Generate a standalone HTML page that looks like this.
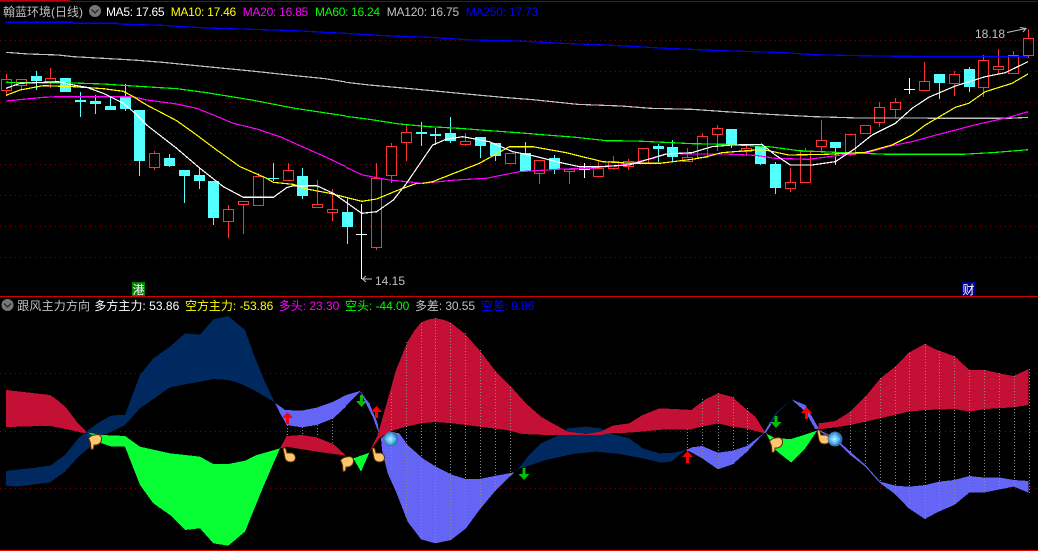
<!DOCTYPE html>
<html><head><meta charset="utf-8"><title>K线</title>
<style>
html,body{margin:0;padding:0;background:#000;width:1038px;height:551px;overflow:hidden}
svg{display:block}
text{font-family:"Liberation Sans","Noto Sans CJK SC",sans-serif;font-size:12px}
</style></head><body>
<svg width="1038" height="551" viewBox="0 0 1038 551" xmlns="http://www.w3.org/2000/svg">
<defs>
<radialGradient id="g" cx="45%" cy="50%" r="55%"><stop offset="0" stop-color="#b8ecff"/><stop offset=".55" stop-color="#58b4ec"/><stop offset="1" stop-color="#1458a8"/></radialGradient>
</defs>
<rect width="1038" height="551" fill="#000"/>
<g shape-rendering="crispEdges">
<path d="M0 1.5H1038" stroke="#8c0000"/>
<path d="M0 .5H70" stroke="#c00000"/>
<path d="M0 296.5H1038" stroke="#d00000"/>
<path d="M0 550.5H1038" stroke="#e00000"/>
<path d="M0 40.5H1038M0 71.5H1038M0 102.5H1038M0 133.5H1038M0 164.5H1038M0 195.5H1038M0 226.5H1038M0 257.5H1038M0 373.5H1038M0 431.5H1038M0 488.5H1038" stroke="#900000" stroke-dasharray="1 4" fill="none"/>

<!-- cyan candles -->
<path fill="none" stroke="#54ffff" stroke-width="1.2" d="M36.5 71V90M65.5 78V92M80.5 92V117M95.5 95V114M110.5 97V110M125.5 84V111M139.5 110V176M169.5 154V167M184.5 170V203M199.5 167V189M213.5 181V225M273.5 163V181M302.5 168V199M347.5 198V244M421.5 122V146M435.5 128V145M450.5 117V143M480.5 137V158M495.5 143V161M525.5 142V172M554.5 155V174M658.5 144V162M672.5 140V162M731.5 129V148M760.5 146V165M775.5 162V194M835.5 142V165M939.5 74V99M969.5 67V92"/>
<path fill="#54ffff" d="M31 76h11V81h-11zM60 78h11V92h-11zM75 100h11V102h-11zM90 101h11V104h-11zM105 106h11V110h-11zM120 97h11V109h-11zM134 110h11V161h-11zM164 158h11V166h-11zM179 170h11V176h-11zM194 175h11V181h-11zM208 181h11V218h-11zM268 178h11V179h-11zM297 176h11V196h-11zM342 212h11V227h-11zM416 132h11V134h-11zM430 134h11V136h-11zM445 133h11V141h-11zM475 137h11V146h-11zM490 143h11V156h-11zM520 153h11V171h-11zM549 158h11V169h-11zM653 146h11V149h-11zM667 147h11V157h-11zM726 129h11V145h-11zM755 146h11V164h-11zM770 164h11V188h-11zM830 142h11V148h-11zM934 74h11V83h-11zM964 69h11V87h-11z"/>

<!-- red candles -->
<path fill="none" stroke="#ff3232" stroke-width="1.2" d="M6.5 74V79M6.5 90V96M1.5 79.5H11.5V90.5H1.5ZM21.5 85V89M16.5 79.5H26.5V85.5H16.5ZM50.5 68V78M50.5 81V88M45.5 78.5H55.5V81.5H45.5ZM154.5 151V153M154.5 167V170M149.5 153.5H159.5V167.5H149.5ZM228.5 205V209M228.5 221V238M223.5 209.5H233.5V221.5H223.5ZM243.5 204V234M238.5 201.5H248.5V204.5H238.5ZM258.5 173V176M253.5 176.5H263.5V205.5H253.5ZM288.5 163V170M283.5 170.5H293.5V180.5H283.5ZM317.5 180V204M312.5 204.5H322.5V207.5H312.5ZM332.5 189V209M332.5 212V221M327.5 209.5H337.5V212.5H327.5ZM376.5 163V178M376.5 247V250M371.5 178.5H381.5V247.5H371.5ZM391.5 143V146M391.5 175V183M386.5 146.5H396.5V175.5H386.5ZM406.5 125V132M406.5 142V161M401.5 132.5H411.5V142.5H401.5ZM465.5 133V141M465.5 144V146M460.5 141.5H470.5V144.5H460.5ZM505.5 153.5H515.5V163.5H505.5ZM539.5 173V184M534.5 160.5H544.5V173.5H534.5ZM569.5 171V184M564.5 169.5H574.5V171.5H564.5ZM598.5 160V168M593.5 168.5H603.5V176.5H593.5ZM613.5 156V161M613.5 168V170M608.5 161.5H618.5V168.5H608.5ZM628.5 159V161M628.5 166V170M623.5 161.5H633.5V166.5H623.5ZM638.5 148.5H648.5V163.5H638.5ZM687.5 148V157M682.5 157.5H692.5V161.5H682.5ZM702.5 133V136M697.5 136.5H707.5V157.5H697.5ZM717.5 125V128M717.5 134V151M712.5 128.5H722.5V134.5H712.5ZM746.5 146V148M746.5 151V156M741.5 148.5H751.5V151.5H741.5ZM790.5 168V182M790.5 188V192M785.5 182.5H795.5V188.5H785.5ZM805.5 148V151M805.5 182V183M800.5 151.5H810.5V182.5H800.5ZM821.5 120V140M821.5 146V153M816.5 140.5H826.5V146.5H816.5ZM850.5 154V156M845.5 134.5H855.5V154.5H845.5ZM860.5 125.5H870.5V133.5H860.5ZM879.5 102V107M879.5 122V127M874.5 107.5H884.5V122.5H874.5ZM895.5 98V102M895.5 109V118M890.5 102.5H900.5V109.5H890.5ZM924.5 62V81M919.5 81.5H929.5V90.5H919.5ZM954.5 71V74M954.5 83V96M949.5 74.5H959.5V83.5H949.5ZM983.5 55V60M983.5 87V97M978.5 60.5H988.5V87.5H978.5ZM998.5 49V66M998.5 69V74M993.5 66.5H1003.5V69.5H993.5ZM1013.5 51V55M1008.5 55.5H1018.5V73.5H1008.5ZM1028.5 29V38M1028.5 55V58M1023.5 38.5H1033.5V55.5H1023.5Z"/>
<path fill="none" stroke="#ffffff" stroke-width="1.2" d="M361.5 204V279M356 234.5H367M584.5 163V178M579 169.5H590M909.5 78V94M904 89.5H915"/>

<!-- MA lines -->
<g transform="scale(.33333)" fill="none" stroke-width="3.6">
<polyline stroke="#0000ff" points="18,67 218,67 220,70 354,70 354,72 487,76 620,84 755,88 885,92 975,97 1038,100"/>
<polyline stroke="#c0c0c0" points="18,157 85,162 175,165 220,170 310,175 400,180 488,187 620,200 755,213 885,227 975,236 1038,246"/>
<polyline stroke="#00ff00" points="18,247 220,249 310,252 400,258 530,266 620,278 755,300 885,325 1038,348"/>
<polyline stroke="#ff00ff" points="18,303 130,292 175,290 400,290 440,300 530,312 590,325 640,345 700,370 770,387 845,412 900,437 975,470 1038,500"/>
<polyline stroke="#ffff00" points="18,286 60,270 130,257 220,260 310,266 370,274 400,290 440,315 530,362 590,405 650,450 720,500 800,535 820,547 880,553 920,567 990,580 1050,595 1085,604 1130,597 1190,572 1250,550 1269,550"/>
<polyline stroke="#ffffff" points="18,265 60,250 110,248 175,245 220,255 260,262 310,280 370,310 400,335 440,375 530,445 600,505 670,560 730,592 820,592 860,563 880,557 950,557 1000,580 1050,615 1085,640 1130,635 1180,600 1218,552"/>
</g>
<g transform="translate(346,0) scale(.33333)" fill="none" stroke-width="3.6">
<polyline stroke="#0000ff" points="0,100 25,102 160,109 250,112 380,120 515,123 650,130 780,135 870,140 960,145 1038,148"/>
<polyline stroke="#c0c0c0" points="0,247 70,255 205,267 340,280 470,292 560,299 695,313 825,318 915,325 1038,328"/>
<polyline stroke="#00ff00" points="0,349 70,358 160,372 250,380 340,385 430,392 515,398 600,405 690,412 780,422 870,423 1038,431"/>
<polyline stroke="#ff00ff" points="0,502 50,525 130,540 230,550 330,540 420,535 520,515 650,507 740,505 840,493 920,475 970,460 1038,462"/>
<polyline stroke="#ffff00" points="230,550 260,545 400,490 490,440 560,440 660,458 770,485 860,490 940,490 1038,478"/>
<polyline stroke="#ffffff" points="180,552 260,435 300,418 350,410 430,425 500,455 560,467 640,487 700,500 760,500 850,495 900,480 960,462 1038,458"/>
</g>
<g transform="translate(692,0) scale(.33333)" fill="none" stroke-width="3.6">
<polyline stroke="#0000ff" points="0,148 55,151 185,155 275,158 365,164 500,167 635,169 1008,170"/>
<polyline stroke="#c0c0c0" points="0,328 100,335 230,343 365,350 500,354 950,355 1008,352"/>
<polyline stroke="#00ff00" points="0,431 100,433 230,440 320,452 455,458 590,463 810,463 900,458 975,452 1008,449"/>
<polyline stroke="#ff00ff" points="0,462 100,462 190,466 250,475 350,478 455,464 530,457 600,437 660,425 740,403 860,372 950,352 1008,335"/>
<polyline stroke="#ffff00" points="0,478 35,472 90,458 190,450 220,450 290,465 400,463 520,457 600,435 660,405 700,375 790,322 830,310 880,275 960,250 1008,222"/>
<polyline stroke="#ffffff" points="0,458 60,440 120,435 210,433 250,465 295,495 360,495 430,485 490,445 540,405 610,370 660,325 710,292 790,258 880,230 940,218 1008,185"/>
</g>

<!-- lower fills -->
<g transform="translate(0,310) scale(.33333)">
<polygon fill="#c41034" points="18,240 150,255 175,272 200,295 230,335 265,372 200,358 150,348 120,348 60,350 18,351"/>
<polygon fill="#00295f" points="18,483 90,475 150,467 195,435 235,385 265,360 300,335 335,316 375,315 420,195 460,145 510,110 555,70 600,74 640,28 685,18 735,60 760,130 790,205 825,278 770,245 720,220 685,210 640,207 600,215 560,222 510,232 470,260 420,295 375,345 335,365 305,375 265,415 235,440 195,485 150,517 90,525 50,530 18,527"/>
<polygon fill="#08ff34" points="265,368 305,375 375,378 420,410 510,430 600,440 640,462 685,462 735,452 770,435 840,415 790,530 735,665 685,707 640,700 600,655 555,660 510,615 460,580 420,525 375,410 335,410 305,400 275,375"/>
<polygon fill="#6464f5" points="825,278 855,300 905,302 950,293 1000,275 1038,255 1038,290 1000,325 950,345 905,352 860,345 840,310"/>
<polygon fill="#c41034" points="840,415 860,378 905,375 950,382 1000,402 1038,437 950,425 860,410"/>
</g>
<g transform="translate(346,310) scale(.33333)">
<polygon fill="#6464f5" points="0,255 42,243 70,280 95,340 100,375 80,320 42,245 0,288"/>
<polygon fill="#08ff34" points="22,445 70,428 45,485"/>
<polygon fill="#00295f" points="510,485 545,440 585,400 640,375 665,355 720,350 765,355 790,370 850,385 890,415 940,430 985,428 1020,420 975,455 945,458 890,445 820,432 750,425 680,432 600,450 510,480"/>
<polygon fill="#6464f5" points="105,385 130,365 160,370 185,405 230,445 270,470 320,495 360,507 400,507 450,497 505,487 450,540 400,600 360,655 315,690 268,700 225,688 185,635 150,545 125,490 108,420"/>
<polygon fill="#c41034" points="70,425 95,375 125,270 150,180 185,95 205,62 225,38 245,29 268,25 292,29 315,38 355,70 400,120 450,185 495,230 540,280 585,320 620,340 665,365 720,372 765,365 800,347 850,340 890,315 940,295 985,297 1038,300 1038,358 960,358 850,368 790,370 765,375 720,375 665,375 600,375 530,372 480,360 400,350 320,340 268,336 225,340 180,350 130,365 100,385"/>
<polygon fill="#6464f5" points="1020,420 1038,412 1038,428"/>
</g>
<g transform="translate(692,310) scale(.33333)">
<polygon fill="#c41034" points="0,298 40,268 78,250 120,260 160,295 190,320 218,365 218,370 160,355 120,350 78,340 40,348 0,357"/>
<polygon fill="#6464f5" points="0,412 30,408 78,428 122,422 165,408 215,370 165,425 122,463 78,478 30,445 0,428"/>
<polygon fill="#6464f5" points="215,370 235,335 237,345 222,368"/>
<polygon fill="#00295f" points="235,335 250,310 298,268 255,312 237,345"/>
<polygon fill="#6464f5" points="298,268 340,285 380,355 370,358 340,305"/>
<polygon fill="#08ff34" points="222,370 250,385 298,387 375,362 340,415 298,458 250,420"/>
<polygon fill="#c41034" points="380,340 430,333 475,305 520,260 565,205 610,170 650,128 698,102 740,122 787,138 832,180 880,180 920,190 965,198 1010,177 1010,285 965,292 880,297 832,305 787,297 700,300 650,305 565,325 475,345 430,352 380,358"/>
<polygon fill="#6464f5" points="380,358 430,385 475,425 520,465 565,515 610,527 650,530 700,525 740,515 787,510 832,498 880,503 920,502 965,510 1010,513 1010,548 965,530 880,547 832,548 787,585 740,605 698,627 650,595 610,553 565,520 520,470 475,435 440,400 385,365"/>
</g>

<!-- dotted verticals -->
<path fill="none" stroke="#8c8c8c" stroke-width="1.2" stroke-dasharray="1 2" d="M287.5 425V436M302.5 427V435M317.5 425V437M332.5 418V444M391.5 393V470M406.5 342V518M421.5 323V539M435.5 318V543M450.5 323V540M465.5 333V528M480.5 350V508M495.5 372V490M510.5 387V475M687.5 429V453M702.5 399V458M718.5 393V469M733.5 397V464M747.5 408V452M850.5 412V455M865.5 397V467M880.5 378V483M895.5 367V494M909.5 353V509M925.5 344V519M939.5 351V512M954.5 356V505M969.5 370V493M984.5 370V492M999.5 373V488M1014.5 376V487M1029.5 369V493"/>
</g>

<!-- arrows -->
<g fill="#ff0000">
<path d="M287.5 412l5.5 6h-4v6h-3v-6h-4z"/>
<path d="M376.5 406l5.5 6h-4v6h-3v-6h-4z"/>
<path d="M687.5 451l5.5 6h-4v6h-3v-6h-4z"/>
<path d="M806.5 407l5.5 6h-4v6h-3v-6h-4z"/>
</g>
<g fill="#00c000">
<path d="M361.5 407l5.5-6h-4v-6h-3v6h-4z"/>
<path d="M524 480l5.5-6h-4v-6h-3v6h-4z"/>
<path d="M776 428l5.5-6h-4v-6h-3v6h-4z"/>
</g>

<!-- hands -->
<g fill="#ffc46e" stroke="#5a3000" stroke-width="1" stroke-linejoin="round">
<path transform="translate(88,434)" d="M.5 4L4 1.5L9 .5Q13.5 .5 13.5 5Q13.5 10 8 11L6 11L5.5 15L3 15.5L2.5 9Z"/>
<path transform="translate(340,456)" d="M.5 4L4 1.5L9 .5Q13.5 .5 13.5 5Q13.5 10 8 11L6 11L5.5 15L3 15.5L2.5 9Z"/>
<path transform="translate(769,437)" d="M.5 4L4 1.5L9 .5Q13.5 .5 13.5 5Q13.5 10 8 11L6 11L5.5 15L3 15.5L2.5 9Z"/>
<path transform="translate(282,448)" d="M1 0L3.5 0L5 5L10 5Q13.5 6.5 13.5 10Q13 14 8.5 14Q4 14 3 10Z"/>
<path transform="translate(371,448)" d="M1 0L3.5 0L5 5L10 5Q13.5 6.5 13.5 10Q13 14 8.5 14Q4 14 3 10Z"/>
<path transform="translate(816,430)" d="M1 0L3.5 0L5 5L10 5Q13.5 6.5 13.5 10Q13 14 8.5 14Q4 14 3 10Z"/>
</g>

<!-- globes -->
<circle cx="391" cy="439" r="7" fill="url(#g)" stroke="#4a7fa8" stroke-width=".7"/>
<circle cx="835" cy="439" r="7" fill="url(#g)" stroke="#4a7fa8" stroke-width=".7"/>
<path d="M391 433V445M385 439H397M835 433V445M829 439H841" stroke="#d8f2ff" stroke-width=".6" stroke-dasharray="1 1"/>

<!-- price markers -->
<path d="M372 279H363M366 276L362.5 279L366 282" fill="none" stroke="#c0c0c0"/>
<text x="375" y="285" fill="#c0c0c0" textLength="30">14.15</text>
<text x="975" y="38" fill="#c0c0c0" textLength="30">18.18</text>
<path d="M1007 32.5L1026 28.5M1020 27.5L1026 28.5L1023 32" fill="none" stroke="#c0c0c0"/>

<!-- badges -->
<rect x="132" y="282" width="13" height="14" fill="#008000"/>
<text x="132.5" y="294" fill="#ffffff">港</text>
<rect x="962" y="282" width="13" height="14" fill="#000090"/>
<text x="962.5" y="294" fill="#ffffff">财</text>

<!-- header 1 -->
<text x="3" y="16" fill="#c0c0c0" textLength="80">翰蓝环境(日线)</text>
<circle cx="95" cy="11" r="6" fill="#777"/>
<path d="M91.5 9.5L95 13L98.5 9.5" fill="none" stroke="#2a2a2a" stroke-width="1.3"/>
<text x="106" y="16" fill="#ffffff" textLength="58.5">MA5: 17.65</text>
<text x="170.7" y="16" fill="#ffff00" textLength="65.5">MA10: 17.46</text>
<text x="242.7" y="16" fill="#ff00ff" textLength="65.5">MA20: 16.85</text>
<text x="315" y="16" fill="#00ff00" textLength="65">MA60: 16.24</text>
<text x="386.7" y="16" fill="#c0c0c0" textLength="72.5">MA120: 16.75</text>
<text x="465.7" y="16" fill="#0000ff" textLength="72.5">MA250: 17.73</text>

<!-- header 2 -->
<circle cx="7.5" cy="305" r="6" fill="#777"/>
<path d="M4 303.5L7.5 307L11 303.5" fill="none" stroke="#2a2a2a" stroke-width="1.3"/>
<text x="17.3" y="310" fill="#c0c0c0" textLength="72.7">跟风主力方向</text>
<text x="94.3" y="310" fill="#ffffff" textLength="85">多方主力: 53.86</text>
<text x="185" y="310" fill="#ffff00" textLength="88.3">空方主力: -53.86</text>
<text x="278.7" y="310" fill="#ff00ff" textLength="60.6">多头: 23.30</text>
<text x="345" y="310" fill="#00ff00" textLength="64.3">空头: -44.00</text>
<text x="415" y="310" fill="#c0c0c0" textLength="60">多差: 30.55</text>
<text x="481" y="310" fill="#0000ff" textLength="53.3">空差: 9.86</text>
</svg>
</body></html>
